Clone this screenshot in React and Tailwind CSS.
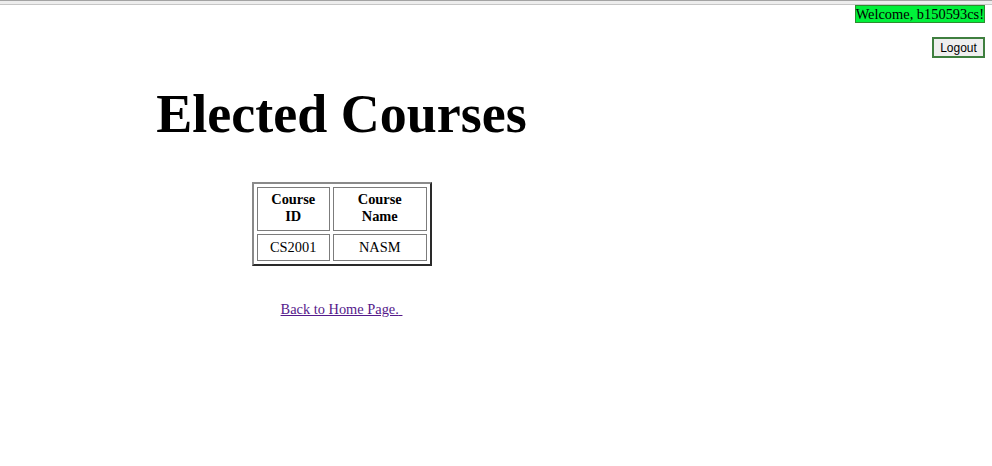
export default function App() {
  const serif = { fontFamily: '"Liberation Serif", "Times New Roman", serif' };
  return (
    <div className="min-h-[466px] bg-white text-black" style={serif}>
      <div className="h-[5px] border-t border-t-[#a3a3a3] border-b border-b-[#c6c6c6] bg-[#ededed]" />
      <div className="flex flex-col items-end pr-[7px]">
        <div className="border border-[#2e8b2e] bg-[#00f03a] px-0 text-[14.4px] leading-[16px] text-black">
          Welcome, b150593cs!
        </div>
        <button
          className="mt-[14px] h-[21px] w-[53px] border-2 border-[#3f7f3f] bg-[#efefef] text-[12px] leading-none text-black"
          style={{ fontFamily: '"Liberation Sans", Arial, sans-serif' }}
        >
          Logout
        </button>
      </div>
      <div className="ml-[7px] flex w-[669px] flex-col items-center">
        <h1 className="mt-[26px] text-[54px] font-bold leading-[60px]">Elected Courses</h1>
        <table
          className="mt-[38px] w-[180px] border-separate border-2 border-t-[#8a8a8a] border-l-[#8a8a8a] border-r-[#2a2a2a] border-b-[#2a2a2a] text-[14.4px] leading-[16.5px]"
          style={{ borderSpacing: '3.5px 3.5px' }}
        >
          <thead>
            <tr>
              <th className="h-[44px] w-[73px] border border-[#7c7c7c] px-1 pt-[3px] pb-[4px] align-top text-center font-bold leading-[17px]">Course<br />ID</th>
              <th className="h-[44px] w-[93px] border border-[#7c7c7c] px-1 pt-[3px] pb-[4px] align-top text-center font-bold leading-[17px]">Course<br />Name</th>
            </tr>
          </thead>
          <tbody>
            <tr>
              <td className="h-[27px] border border-[#7c7c7c] text-center">CS2001</td>
              <td className="h-[27px] border border-[#7c7c7c] text-center">NASM</td>
            </tr>
          </tbody>
        </table>
        <a href="#" className="mt-[35px] text-[14.4px] leading-[16.5px] text-[#551a8b] underline">
          Back to Home Page.{'\u00a0'}
        </a>
      </div>
    </div>
  );
}
